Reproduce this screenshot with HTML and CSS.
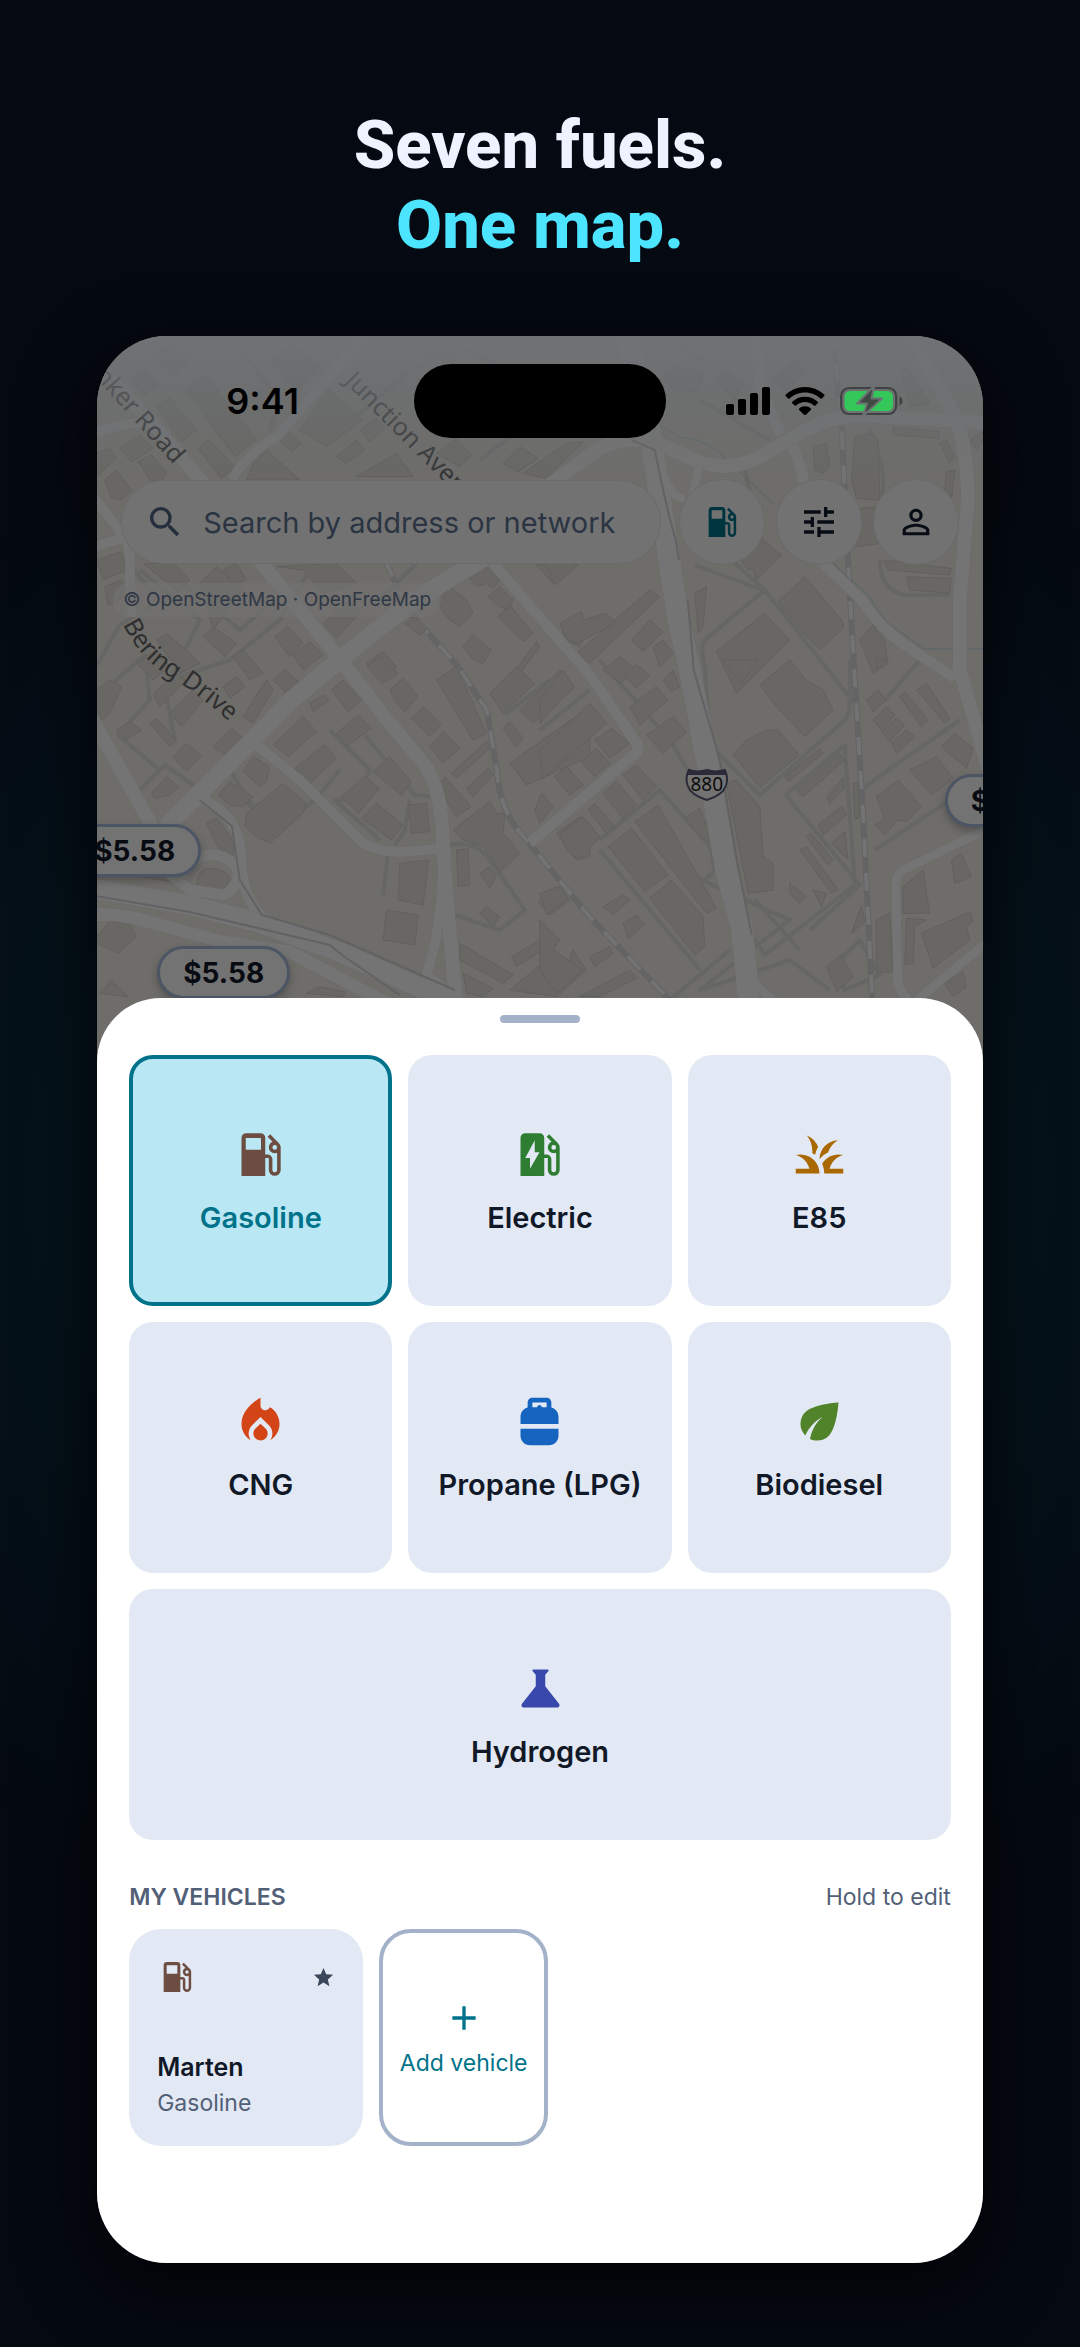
FILE: index.html
```html
<!DOCTYPE html>
<html lang="en">
<head>
    <meta charset="UTF-8">
    <meta name="viewport" content="width=device-width, initial-scale=1">
    <title>Seven fuels. One map.</title>
    <link rel="stylesheet" href="styles.css">
</head>
<body>
<!-- shared icons -->
<svg class="sprite" aria-hidden="true">
    <symbol id="gas" viewBox="0 0 24 24"><path fill-rule="evenodd" d="M19.77 7.23l.01-.01-3.72-3.72L15 4.56l2.11 2.11C16.17 7.03 15.5 7.93 15.5 9a2.5 2.5 0 0 0 2.5 2.5c.36 0 .69-.08 1-.21v7.21a1 1 0 0 1-2 0V14a2 2 0 0 0-2-2h-1V5a2 2 0 0 0-2-2H6a2 2 0 0 0-2 2v16h10v-7.5h1.5v5a2.5 2.5 0 0 0 5 0V9c0-.69-.28-1.32-.73-1.77zM18 10a1 1 0 1 1 0-2 1 1 0 0 1 0 2zM12.2 10H5.8V5h6.4z"/></symbol>
</svg>
<main class="poster">
    <h1 class="headline">Seven fuels.<br><span>One map.</span></h1>
    <div class="phone">
        <section class="map">
            <svg class="map-art" viewBox="97 336 886 740" preserveAspectRatio="xMidYMin slice" aria-hidden="true">
                <defs>
                    <linearGradient id="fade" x1="0" y1="0" x2="0" y2="1">
                        <stop offset="0" stop-color="#707276" stop-opacity=".9"/>
                        <stop offset=".5" stop-color="#6c6f72" stop-opacity=".5"/>
                        <stop offset="1" stop-color="#6c6e70" stop-opacity="0"/>
                    </linearGradient>
                    <path id="bering" d="M123 624 Q139 658 169 676 T239 730"/>
                    <g id="roads">
                        <path stroke-width="22" d="M625 330L650 430L668 550L678 617L690 670L707 760L727 873L742 927L750 1010"/>
                        <path stroke-width="14" d="M548 486L600 448Q625 436 655 442L700 462Q728 472 758 458L810 428Q838 414 873 416L990 423"/>
                        <path stroke-width="11" d="M755 330L760 385L781 435M792 445Q802 465 805 490M820 560L862 600Q880 628 905 645L955 678M493 563L590 675L636 742Q642 748 634 755L530 843"/>
                        <path stroke-width="14" d="M907 330L955 415Q968 450 968 500L960 600L960 670L972 712L990 775"/>
                        <path stroke-width="18" d="M500 548L415 600L343 657L288 703L253 740L165 828"/>
                        <path stroke-width="14" d="M255 555L337 655L385 717L425 765Q442 790 443 840L447 900L457 1010"/>
                        <path stroke-width="10" d="M443 865Q443 900 436 940L427 975L457 1000M253 742L300 780L363 843Q380 852 400 852L440 849"/>
                        <path stroke-width="14" d="M90 715L150 822L160 850M97 365L150 420L205 485"/>
                        <path stroke-width="10" d="M232 480Q245 455 277 437L337 367L370 330M90 493L126 538Q131 550 130 570L132 617M90 548L130 536M90 436Q110 425 142 422"/>
                        <path stroke-width="11" d="M203 798L222 812Q241 828 241 860Q243 900 265 920L323 945M165 870L190 890L225 895Q245 880 235 865Q220 850 200 857Q190 862 182 877"/>
                        <path stroke-width="20" d="M90 888L190 905L257 922L340 952L455 1003"/>
                        <path stroke-width="13" d="M90 915Q120 912 157 924L223 942L290 952L400 1010"/>
                        <path stroke-width="9" d="M990 828L903 870Q896 874 896 885L898 980Q900 995 910 1000M990 940L910 1006M700 462L692 500M655 450Q668 500 685 498M750 980L790 1015"/>
                    </g>
                </defs>
                <rect x="97" y="336" width="886" height="740" fill="#6e6d6a"/>

                <!-- driveways -->
                <g class="lanes">
                    <path d="M330 440L410 370M140 570L200 620L170 680L230 660L280 620L310 570M420 560L380 600M105 690L145 655L150 700L118 735L160 770M165 690L175 740M130 800L165 765L200 790M230 770L255 810M245 800L275 832L315 800L340 770M330 730L370 770L355 800L335 800L380 840M365 735L415 795L450 798M410 800L405 830L395 845M388 855L383 895M450 845Q475 840 490 860L525 910L500 930L455 915M505 715L550 680M600 660L670 740L700 790M540 730L590 690"/>
                    <path d="M705 640Q700 650 705 665L710 745L760 795L845 720Q852 715 850 660M705 640L765 590L735 563M765 590L860 710M695 565L762 590M745 470L765 555M786 795L845 745L855 885L765 955L730 905M786 795L860 885L810 930M705 820L715 870L705 880M680 870L790 920L700 990L790 960L830 990M755 900L800 950M600 840L660 790L740 880M600 850L700 970M670 1000L730 950M860 790L960 720M885 700L920 660M875 850L950 800M840 960L860 940L880 975L845 990zM880 560Q880 590 905 595L950 595M860 510L900 510M870 430Q890 480 880 500M420 370L440 350L480 390M450 340L560 400M480 460L560 400M240 350L280 400L270 430M670 340L700 360M700 400L770 440M125 560L160 600L120 625L97 665M180 580L240 630L275 600"/>
                </g>
                <g class="rail">
                    <path d="M833 330L842 430L848 557L855 680L863 810L873 1010M385 560L410 613L457 665L487 710L497 770Q500 810 520 832L590 917L670 1000"/>
                    <path class="rail-dash" d="M833 330L842 430L848 557L855 680L863 810L873 1010M385 560L410 613L457 665L487 710L497 770Q500 810 520 832L590 917L670 1000"/>
                </g>

                <g class="blocks" transform="translate(90 330) scale(.3333)">
                    <path d="M190 80L240 45L300 95L250 135zM120 150L165 120L210 165L165 195zM200 230L240 205L320 300L275 335zM285 175L350 140L500 330L435 380zM325 355L355 330L435 410L395 445zM90 355L150 315L190 355L125 395zM145 395L185 375L230 425L215 455L180 450zM45 450L80 420L125 480L95 510L65 505zM20 370L60 355L80 385L20 440zM490 400L530 360L630 450L470 450zM570 330L600 310L635 340L605 365zM630 300L715 175L820 270L710 350zM740 380L800 330L825 360L770 400zM810 300L860 265L885 295L840 335zM540 90L610 40L690 110L620 180zM800 440L920 370L970 440zM1040 370L1100 325L1145 375L1110 410zM1240 400L1290 350L1345 385L1285 425zM1300 430L1430 340L1480 335L1370 445zM20 690L95 665L110 720L40 750zM45 770L95 750L110 800L55 825zM160 700L250 700L300 750L265 785zM330 760L380 710L460 780L370 900zM400 720L440 700L470 750L430 770zM560 710L740 700L800 760L700 790L640 720zM700 880L780 815L810 850L740 925zM555 920L595 890L640 940L600 980zM610 975L660 935L700 975L640 1020zM340 920L370 890L440 940L405 980zM430 980L460 960L520 1030L480 1050zM200 930L230 910L290 960L330 1000L270 1030zM140 1000L200 960L240 1010L190 1050zM1340 705L1470 700L1395 765zM1135 740L1175 705L1240 740L1210 775L1190 760L1165 770zM1040 820L1080 770L1130 810L1150 850L1110 890L1080 870zM1195 800L1230 770L1270 810L1255 840L1230 830zM1225 860L1260 825L1330 910L1300 935zM1120 950L1150 915L1205 960L1180 1000L1150 990zM830 1000L880 965L920 1010L880 1050zM945 880L975 860L1010 900L990 915zM1270 1030L1340 935L1350 950L1280 1045zM1420 890L1470 850L1500 900L1470 950L1430 930z"/>
                </g>
                <g class="blocks" transform="translate(540 330) scale(.3333)">
                    <path d="M370 140L400 110L495 125L470 185L400 180zM530 150L555 120L615 160L580 210zM580 205L640 215L600 265L570 260zM700 150L760 90L800 125L740 180zM820 350L860 340L870 410L850 430L825 420zM945 320L990 310L1015 330L1020 510L950 505L935 450zM1060 290L1200 305L1195 325L1060 315zM1200 340L1220 330L1245 380L1230 400zM1220 425L1245 420L1235 510L1215 480zM1100 110L1170 220L1110 230L1085 130zM605 690L670 630L725 675L650 750L640 720L625 720zM940 540L1010 530L1025 640L945 650zM1030 690L1235 715L1230 735L1045 720zM1100 740L1235 745L1230 790L1110 780zM715 815L795 740L910 875L910 895L840 960L790 910zM530 965L675 850L750 930L590 1090zM465 790L500 770L490 890L475 910zM60 880L125 845L130 870L200 850L230 880L110 940L75 920zM110 970L330 780L360 800L150 1000zM275 930L330 870L370 905L310 965zM340 950L370 930L400 970L360 1010zM960 930L1000 885L1035 930L1045 1000L1000 1030zM1010 985L1040 990L1010 1020zM1290 330L1330 305L1330 330L1310 360zM20 700L100 690L110 710L45 765zM190 1020L240 980L290 1020L240 1060z"/>
                </g>
                <g class="blocks" transform="translate(90 660) scale(.3333)">
                    <path d="M190 100L260 40L290 60L210 140zM240 160L310 90L340 120L275 200zM550 60L585 30L625 65L590 100zM400 80L440 50L465 80L420 115zM660 130L700 105L718 120L670 155zM725 90L760 60L815 120L775 155zM900 90L940 55L985 110L945 155L920 130zM740 220L805 165L845 205L770 260zM550 255L640 170L680 215L595 290zM615 325L705 255L740 295L655 375zM460 335L490 290L540 320L530 365L510 380zM370 260L425 205L460 235L405 285zM250 290L290 250L335 285L290 335zM185 400L230 350L265 380L240 405L195 415zM385 405L420 365L490 410L460 440L420 435zM470 460L580 370L650 430L640 460L540 550L500 530L465 495zM350 490L380 475L430 540L430 590L400 590zM755 410L825 350L870 385L805 460zM850 335L900 290L965 365L935 405zM815 475L860 430L940 495L905 540zM955 435L1010 430L1020 515L965 520zM965 175L1000 140L1055 195L1020 230zM1020 260L1060 215L1110 265L1060 310zM1040 60L1100 20L1190 220L1150 240zM1085 340L1190 245L1205 260L1100 355zM1130 385L1195 325L1210 345L1150 410zM1045 380L1065 350L1145 440L1100 470zM1090 510L1200 425L1220 460L1245 460L1240 520L1290 580L1230 635L1180 560L1120 540zM1170 640L1200 620L1220 650L1200 685zM1240 205L1260 185L1300 235L1280 260zM1260 310L1500 140L1500 290L1310 375zM1200 100L1280 20L1335 70L1240 160zM1290 150L1410 30L1455 80L1330 190zM1335 450L1355 400L1390 440L1350 490zM1395 350L1430 320L1480 375L1440 405zM1400 520L1470 470L1500 500L1500 590L1460 600zM1345 725L1400 680L1440 720L1380 765zM890 750L985 765L975 855L880 840zM930 610L1015 600L1010 660L1000 735L925 720zM1100 570L1135 565L1140 675L1105 680zM1110 850L1270 945L1240 970L1110 900zM1120 940L1210 985L1180 1010L1130 1000zM1265 890L1370 830L1385 855L1280 920zM1170 760L1190 740L1230 770L1210 800zM20 830L60 785L120 790L140 830L85 880L20 850zM650 1000L690 980L765 995L760 1010zM30 1000L65 960L115 1010zM20 90L60 60L95 80L60 160L20 190zM80 210L120 185L155 210L110 240zM180 190L200 175L260 240L240 260zM150 650L240 640L250 665zM830 20L870 -10L925 40L880 70zM460 170L530 60L550 90L490 190zM320 680Q320 620 370 625Q420 630 428 680Q400 710 340 700zM1260 990L1370 900L1430 930L1450 870L1490 930L1400 1010z"/>
                </g>
                <g class="blocks" transform="translate(540 660) scale(.3333)">
                    <path d="M255 50L290 15L330 45L290 85zM270 140L350 80L385 120L300 195zM320 225L400 170L440 215L370 280zM370 60L400 30L420 80L395 95zM550 0L655 0L605 70zM660 75L750 0L800 60L850 90L880 150L795 230L710 140zM580 285L620 240L680 210L715 210L778 285L660 382zM165 240L215 205L270 250L210 295zM125 305L170 265L210 310L165 350zM45 350L80 320L130 375L90 405zM250 345L290 315L350 380L310 420zM190 400L230 365L290 435L250 475zM145 450L165 430L225 500L200 520zM60 520L130 470L180 530L120 600L80 570zM205 560L275 505L385 645L315 695zM285 485L355 435L530 745L500 760zM330 715L395 660L490 770L495 860L465 885zM435 475L480 445L510 520L490 540zM560 370L590 360L660 440L670 590L700 610L700 690L625 700zM735 350L840 265L850 280L745 365zM770 390L900 280L915 300L790 410zM860 410L910 355L915 385L870 430zM835 495L905 440L920 465L850 525zM875 550L915 515L925 600zM780 570L800 560L895 690L875 700zM800 530L815 520L880 600L865 615zM750 670L800 710L780 730L750 700zM820 690L860 700L845 740zM1010 410L1075 360L1145 440L1100 485L1075 480L1035 525L1005 495L1035 475zM1110 330L1190 290L1240 355L1175 405zM1205 260L1245 220L1300 265L1280 325L1240 290zM980 120L1015 90L1040 120L1000 155zM1000 180L1040 140L1065 165L1025 210zM1025 215L1070 175L1095 195L1050 245zM1055 250L1100 210L1125 230L1070 280zM1080 110L1095 95L1165 180L1145 200zM1130 90L1160 70L1230 175L1215 190zM940 370L955 370L960 470L945 480zM1235 600L1265 580L1295 650L1245 670zM1090 680L1150 630L1170 760L1090 760zM1145 820L1290 755L1300 785L1280 800L1290 840L1180 925zM1100 775L1160 780L1125 800L1120 910L1095 915zM1010 780L1050 760L1060 935L1010 940zM935 820L965 735L975 785zM190 740L250 705L270 720L220 765zM250 790L290 765L315 795L265 835zM0 780L60 840L40 870L130 930L50 1000L0 930zM150 890L210 860L220 880L165 920zM0 115L70 30L100 80L0 190zM0 270L150 130L200 190L10 355zM120 1010L270 930L290 955L180 1010zM1215 970L1270 935L1280 980L1240 1010zM860 920L905 885L940 950L890 995zM0 700L60 680L85 715L20 765z"/>
                </g>

                <g class="creek">
                    <path d="M658 425L680 437Q710 440 725 458L775 505M833 563L870 597Q880 615 887 622L924 649H983"/>
                </g>
                <use href="#roads" class="road-case"/>
                <use href="#roads" class="road-fill"/>
                <path class="road-edge" d="M632 440L655 450Q668 515 676 540L679 560M90 895L190 912L330 945L345 957L400 995M688 600L694 670L720 760L737 860L750 925L752 935M200 800L232 826L240 880L262 915L330 935L455 990"/>

                <g class="street">
                    <text text-anchor="end" transform="translate(174 465) rotate(48)">Bunker Road</text>
                    <text class="street-soft" transform="translate(344 382) rotate(45)">Junction Avenue</text>
                    <text><textPath href="#bering">Bering Drive</textPath></text>
                </g>
                <g>
                    <path d="M689 770q9 3 18 0q9 3 18 0q4 8 1 16q-3 9-19 14q-16-5-19-14q-3-8 1-16z" fill="#737373" stroke="#2b2a38" stroke-width="2"/>
                    <path d="M689 770q9 3 18 0q9 3 18 0l2 5h-40z" fill="#2b2a38"/>
                    <text class="shield" x="707" y="791" text-anchor="middle">880</text>
                </g>
                <rect x="97" y="336" width="886" height="150" fill="url(#fade)"/>
            </svg>

            <button class="pin pin-west">$5.58</button>
            <button class="pin pin-south">$5.58</button>
            <button class="pin pin-east">$5.58</button>

            <div class="status">
                <span class="time">9:41</span>
                <span class="island"></span>
                <span class="signals">
                    <svg width="44" height="28" viewBox="0 0 44 28" role="img" aria-label="Signal"><rect y="17" width="8" height="11" rx="2"/><rect x="12" y="12" width="8" height="16" rx="2"/><rect x="24" y="6" width="8" height="22" rx="2"/><rect x="36" width="8" height="28" rx="2"/></svg>
                    <svg width="40" height="28" viewBox="0 0 40 28" role="img" aria-label="Wi-Fi"><path d="M20 0C12.400 0 5.700 2.900.8 7.600c-.5.500-.5 1 0 1.500l2.200 2.300c.4.400 1 .4 1.500 0C8.500 7.700 14 5.400 20 5.400s11.500 2.300 15.500 6c.5.400 1.100.4 1.500 0l2.200-2.300c.5-.5.5-1 0-1.500C34.300 2.900 27.600 0 20 0zM20 9.700c-5 0-9.500 1.900-12.700 5-.5.500-.5 1 0 1.500l2.300 2.300c.4.400 1 .4 1.500 0C13.400 16.400 16.500 15 20 15s6.600 1.400 8.900 3.500c.5.400 1.100.4 1.500 0l2.300-2.300c.5-.5.5-1 0-1.500-3.200-3.100-7.700-5-12.700-5zM20 19.300c-2.300 0-4.300.8-5.800 2.100-.5.500-.5 1 0 1.500l5.100 5c.4.400 1 .4 1.400 0l5.100-5c.5-.5.5-1 0-1.500-1.500-1.300-3.500-2.100-5.800-2.100z"/></svg>
                    <svg width="64" height="30" viewBox="0 0 64 30" role="img" aria-label="Battery charging"><rect x="1.200" y="2" width="55" height="26" rx="8" fill="none" stroke="#404143" stroke-width="2.200"/><rect x="4.500" y="5" width="48.500" height="20" rx="5.500" fill="#34c759"/><path d="M59.500 10.500c4 1.500 4 7.500 0 9z" fill="#404143"/><path d="M34 0L17 17.500h10L23 30L42 12.500H31.500L34 0z" fill="#404943" stroke="#6d7172" stroke-width="2" stroke-linejoin="round"/></svg>
                </span>
            </div>

            <div class="toolbar">
                <label class="search">
                    <svg class="icon" viewBox="0 0 24 24" aria-hidden="true"><path d="M15.500 14h-.79l-.28-.27A6.470 6.470 0 0 0 16 9.500 6.500 6.500 0 1 0 9.500 16c1.610 0 3.090-.59 4.230-1.570l.27.28v.79l5 4.990L20.490 19l-4.990-5zm-6 0a4.500 4.500 0 1 1 0-9 4.500 4.500 0 0 1 0 9z"/></svg>
                    <input type="search" placeholder="Search by address or network" aria-label="Search by address or network">
                </label>
                <div class="tools">
                    <button class="round round-fuel" aria-label="Fuel type"><svg class="icon"><use href="#gas"/></svg></button>
                    <button class="round" aria-label="Filters"><svg class="icon" viewBox="0 0 24 24"><path d="M3 17v2h6v-2H3zM3 5v2h10V5H3zm10 16v-2h8v-2h-8v-2h-2v6h2zM7 9v2H3v2h4v2h2V9H7zm14 4v-2H11v2h10zm-6-4h2V7h4V5h-4V3h-2v6z"/></svg></button>
                    <button class="round" aria-label="Profile"><svg class="icon" viewBox="0 0 24 24"><path d="M12 5.900a2.100 2.100 0 1 1 0 4.200 2.100 2.100 0 0 1 0-4.200m0 9c2.970 0 6.100 1.460 6.100 2.100v1.100H5.900V17c0-.64 3.130-2.100 6.100-2.100M12 4C9.790 4 8 5.790 8 8s1.790 4 4 4 4-1.790 4-4-1.790-4-4-4zm0 9c-2.670 0-8 1.340-8 4v3h16v-3c0-2.660-5.330-4-8-4z"/></svg></button>
                </div>
            </div>
            <p class="credit">© <a href="#osm">OpenStreetMap</a> · <a href="#ofm">OpenFreeMap</a></p>
        </section>

        <section class="sheet">
            <div class="handle"></div>
            <div class="fuels">
                <button class="fuel selected" aria-pressed="true">
                    <svg class="gas"><use href="#gas"/></svg>
                    Gasoline
                </button>
                <button class="fuel">
                    <svg class="electric" viewBox="0 0 24 24"><path fill-rule="evenodd" d="M19.77 7.230l.01-.01-3.720-3.720L15 4.560l2.110 2.110C16.170 7.030 15.500 7.930 15.500 9a2.500 2.500 0 0 0 2.500 2.500c.36 0 .69-.08 1-.21v7.210a1 1 0 0 1-2 0V14a2 2 0 0 0-2-2h-1V5a2 2 0 0 0-2-2H6a2 2 0 0 0-2 2v16h10v-7.500h1.500v5a2.500 2.500 0 0 0 5 0V9c0-.69-.28-1.320-.73-1.770zM18 10a1 1 0 1 1 0-2 1 1 0 0 1 0 2zM8 18v-4.500H6L10 6v5h2z"/></svg>
                    Electric
                </button>
                <button class="fuel">
                    <svg class="ethanol" viewBox="0 0 24 24"><path d="M12 20H2v-2h5.750C7.020 15.190 4.810 12.990 2 12.260 2.640 12.100 3.310 12 4 12c4.420 0 8 3.580 8 8zm10-7.740c-.64-.16-1.310-.26-2-.26-2.930 0-5.480 1.580-6.880 3.930.29.66.53 1.350.67 2.070.13.650.2 1.320.2 2H22v-2h-5.750c.73-2.810 2.940-5.010 5.750-5.740zm-6.360-1.240c.78-2.090 2.230-3.840 4.090-5C15.440 6.160 12 9.670 12 14v.02c.95-1.270 2.200-2.300 3.640-3zm-4.220-2.170C10.580 6.660 8.880 4.890 6.700 4 8.140 5.860 9 8.180 9 10.710c0 .21-.03.41-.04.61.43.24.83.52 1.220.82.21-1.180.65-2.290 1.240-3.290z"/></svg>
                    E85
                </button>
                <button class="fuel">
                    <svg class="cng" viewBox="0 0 24 24"><path d="M12 12.900l-2.130 2.090C9.310 15.550 9 16.280 9 17.060 9 18.680 10.350 20 12 20s3-1.320 3-2.940c0-.78-.31-1.520-.87-2.070L12 12.900z"/><path d="M16 6l-.44.55C14.380 8.020 12 7.190 12 5.300V2S4 6 4 13c0 2.920 1.560 5.470 3.890 6.860-.56-.79-.89-1.760-.89-2.800 0-1.320.52-2.560 1.470-3.500L12 10.100l3.530 3.470c.95.93 1.470 2.170 1.470 3.500 0 1.020-.31 1.960-.85 2.750 1.890-1.150 3.290-3.060 3.710-5.300.66-3.550-1.070-6.900-3.860-8.520z"/></svg>
                    CNG
                </button>
                <button class="fuel">
                    <svg class="propane" viewBox="0 0 24 24"><path d="M4 15v3c0 2.210 1.790 4 4 4h8c2.210 0 4-1.790 4-4v-3H4zm16-2v-3c0-1.860-1.280-3.410-3-3.860V4c0-1.100-.9-2-2-2H9c-1.100 0-2 .9-2 2v2.140C5.280 6.590 4 8.140 4 10v3h16zM9 4h6v2h-2c0-.55-.45-1-1-1s-1 .45-1 1H9V4z"/></svg>
                    Propane (LPG)
                </button>
                <button class="fuel">
                    <svg class="bio" viewBox="0 0 24 24"><path d="M6.050 8.050c-2.730 2.730-2.730 7.150-.02 9.880 1.470-3.400 4.090-6.240 7.360-7.930-2.770 2.340-4.710 5.610-5.390 9.320 2.600 1.230 5.800.78 7.950-1.370C19.430 14.470 20 4 20 4S9.530 4.570 6.050 8.050z"/></svg>
                    Biodiesel
                </button>
                <button class="fuel wide">
                    <svg class="hydrogen" viewBox="0 0 24 24"><path d="M14 6.200v4.800l5.800 7.400c.5.700.1 1.600-.8 1.600H5c-.9 0-1.300-.9-.8-1.600L10 11V6.200L8.700 4.700c-.3-.3-.1-.7.3-.7h6c.4 0 .6.400.3.700z"/></svg>
                    Hydrogen
                </button>
            </div>

            <div class="section-head">
                <h2>MY VEHICLES</h2>
                <span>Hold to edit</span>
            </div>
            <div class="vehicles">
                <button class="vehicle">
                    <span class="vehicle-top">
                        <svg class="icon gas"><use href="#gas"/></svg>
                        <svg class="star" viewBox="0 0 24 24"><path d="M12 17.270L18.180 21l-1.640-7.030L22 9.240l-7.190-.61L12 2 9.190 8.630 2 9.240l5.460 4.730L5.820 21z"/></svg>
                    </span>
                    <strong>Marten</strong>
                    <small>Gasoline</small>
                </button>
                <button class="add">
                    <svg class="icon" viewBox="0 0 24 24"><path d="M19 13h-6v6h-2v-6H5v-2h6V5h2v6h6z"/></svg>
                    Add vehicle
                </button>
            </div>
        </section>
    </div>
</main>
</body>
</html>
```
FILE: styles.css
```css
* { box-sizing: border-box; }
body {
    margin: 0;
    min-height: 100vh;
    background: radial-gradient(ellipse 80% 36% at 50% 50%, #042430 0%, #04121a 55%, #050911 100%);
    color: #111827;
    font-family: Inter, "Liberation Sans", sans-serif;
}
button, input {
    font: inherit;
    color: inherit;
}
button {
    border: none;
    cursor: pointer;
}
svg {
    display: block;
    fill: currentColor;
}
.sprite {
    display: none;
}
.icon {
    width: 40px;
    height: 40px;
    flex: none;
}

/* poster */
.poster {
    padding: 105px 9% 84px;
}
.headline {
    margin: 0 0 71px;
    text-align: center;
    font: 800 67px/80px Roboto, sans-serif;
    color: #eff3ff;
}
.headline span {
    color: #4de4ff;
}
.phone {
    overflow: hidden;
    border-radius: 70px;
    background: #6e6d6a;
    box-shadow: 0 24px 70px 4px rgba(0, 0, 0, .7);
}

/* map */
.map {
    position: relative;
    height: 740px;
    padding-top: 28px;
    overflow: hidden;
}
.map-art {
    position: absolute;
    inset: 0;
    width: 100%;
    height: 100%;
    fill: none;
}
.lanes {
    stroke: #666665;
    stroke-width: 4;
    stroke-linejoin: round;
}
.blocks {
    fill: #686764;
    stroke: #61605e;
    stroke-width: 3;
}
.rail {
    stroke: #646464;
    stroke-width: 6;
}
.rail-dash {
    stroke: #737373;
    stroke-width: 4;
    stroke-dasharray: 18 16;
}
.creek {
    stroke: #566567;
    stroke-width: 1;
}
.road-case {
    stroke: #636363;
    stroke-linejoin: round;
}
.road-fill {
    stroke: #747474;
    stroke-linejoin: round;
}
.road-edge {
    stroke: #626262;
    stroke-width: 2;
}
.street {
    font: 25px "Noto Sans", sans-serif;
    fill: #2e2e2e;
}
.street-soft {
    fill: #303132;
}
.shield {
    font: 19px "Noto Sans", sans-serif;
    fill: #0c0c0c;
}
.pin {
    position: absolute;
    width: 133px;
    height: 53px;
    padding: 0;
    border: 3px solid #4b5563;
    border-radius: 27px;
    background: #737373;
    color: #080b12;
    font-size: 28px;
    font-weight: 700;
    box-shadow: 0 4px 8px rgba(0, 0, 0, .25);
}
.pin-west {
    left: -29px;
    top: 488px;
}
.pin-south {
    left: 60px;
    top: 610px;
}
.pin-east {
    right: -95px;
    top: 438px;
}
.status {
    position: relative;
    display: grid;
    grid-template-columns: 1fr 252px 1fr;
    align-items: center;
    height: 74px;
    color: #000;
}
.time {
    padding-left: 14px;
    text-align: center;
    font-size: 36px;
    font-weight: 600;
}
.island {
    height: 74px;
    border-radius: 37px;
    background: #000;
}
.signals {
    display: flex;
    justify-content: center;
    align-items: center;
    gap: 15px;
    padding-right: 18px;
}
.toolbar {
    position: relative;
    display: flex;
    align-items: center;
    gap: 20px;
    margin: 42px 25px 19px;
}
.search {
    flex: 1;
    min-width: 0;
    display: flex;
    align-items: center;
    gap: 18px;
    height: 82px;
    padding: 0 16px 0 23px;
    border-radius: 41px;
    background: #727272;
    box-shadow: 0 0 0 1px #6b6b6b;
    color: #252e3d;
}
.search input {
    flex: 1;
    min-width: 0;
    padding: 0;
    border: none;
    outline: none;
    background: none;
    font-size: 29px;
}
.search input::placeholder {
    color: #2b3442;
    opacity: 1;
}
.tools {
    display: flex;
    gap: 13px;
}
.round {
    display: grid;
    place-items: center;
    width: 84px;
    height: 84px;
    padding: 0;
    border-radius: 50%;
    background: #727272;
    box-shadow: 0 0 0 1px #6b6b6b;
    color: #080c14;
}
.round-fuel {
    color: #00343f;
}
.credit {
    position: relative;
    width: fit-content;
    margin: 0 16px;
    padding: 0 10px;
    border-radius: 17px;
    background: rgba(115, 115, 115, .6);
    color: #2f3744;
    font-size: 19px;
    line-height: 34px;
}
.credit a {
    color: inherit;
    text-decoration: none;
}

/* bottom sheet */
.sheet {
    position: relative;
    margin-top: -78px;
    padding: 17px 32px 117px;
    border-radius: 64px 64px 0 0;
    background: #fff;
}
.handle {
    width: 80px;
    height: 8px;
    margin: 0 auto 32px;
    border-radius: 4px;
    background: #a4b2c9;
}
.fuels {
    display: grid;
    grid-template-columns: repeat(3, 1fr);
    gap: 16px;
}
.fuel {
    display: flex;
    flex-direction: column;
    align-items: center;
    justify-content: center;
    gap: 18px;
    height: 251px;
    padding: 0 8px;
    border-radius: 24px;
    background: #e3e9f4;
    font-size: 29px;
    font-weight: 600;
    line-height: 34px;
}
.fuel svg {
    width: 57px;
    height: 57px;
}
.fuel.selected {
    border: 4px solid #00728a;
    background: #b9e7f4;
    color: #00728a;
}
.wide {
    grid-column: 1 / -1;
}
.gas { color: #6d4c41; }
.electric { color: #2e7d32; }
.ethanol { color: #a96800; }
.cng { color: #d34516; }
.propane { color: #1565c0; }
.bio { color: #50832a; }
.hydrogen { color: #3949ab; }
.section-head {
    display: flex;
    justify-content: space-between;
    align-items: center;
    margin: 42px 0 17px;
    color: #526077;
    font-size: 23px;
    line-height: 30px;
}
.section-head h2 {
    margin: 0;
    font-size: 23px;
    font-weight: 600;
}
.vehicles {
    display: flex;
    gap: 16px;
}
.vehicle, .add {
    display: flex;
    flex-direction: column;
    height: 217px;
    border-radius: 32px;
    font-size: 23px;
    line-height: 30px;
}
.vehicle {
    width: 234px;
    padding: 28px;
    background: #e3e9f4;
    text-align: left;
}
.vehicle-top {
    display: flex;
    justify-content: space-between;
    align-items: center;
    align-self: stretch;
    margin-bottom: auto;
}
.star {
    width: 23px;
    height: 23px;
    color: #3b465a;
}
.vehicle strong {
    font-size: 25px;
    font-weight: 600;
    line-height: 42px;
}
.vehicle small {
    color: #526077;
    font-size: 23px;
}
.add {
    align-items: center;
    justify-content: center;
    gap: 10px;
    width: 169px;
    padding: 0;
    border: 4px solid #a4b2c9;
    background: #fff;
    color: #00728a;
}
```
